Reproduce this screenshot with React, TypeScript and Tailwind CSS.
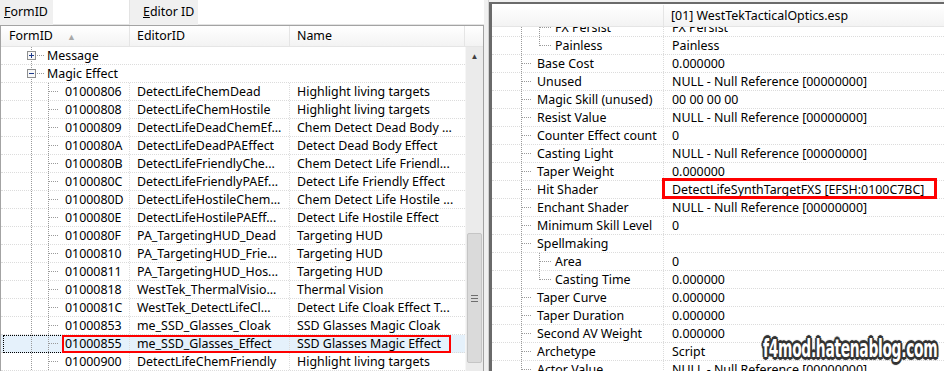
import React from "react";

const records = [
  ["01000806", "DetectLifeChemDead", "Highlight living targets"],
  ["01000808", "DetectLifeChemHostile", "Highlight living targets"],
  ["01000809", "DetectLifeDeadChemEf...", "Chem Detect Dead Body ..."],
  ["0100080A", "DetectLifeDeadPAEffect", "Detect Dead Body Effect"],
  ["0100080B", "DetectLifeFriendlyChe...", "Chem Detect Life Friendl..."],
  ["0100080C", "DetectLifeFriendlyPAEf...", "Detect Life Friendly Effect"],
  ["0100080D", "DetectLifeHostileChem...", "Chem Detect Life Hostile ..."],
  ["0100080E", "DetectLifeHostilePAEff...", "Detect Life Hostile Effect"],
  ["0100080F", "PA_TargetingHUD_Dead", "Targeting HUD"],
  ["01000810", "PA_TargetingHUD_Frie...", "Targeting HUD"],
  ["01000811", "PA_TargetingHUD_Hos...", "Targeting HUD"],
  ["01000818", "WestTek_ThermalVisio...", "Thermal Vision"],
  ["0100081C", "WestTek_DetectLifeCl...", "Detect Life Cloak Effect T..."],
  ["01000853", "me_SSD_Glasses_Cloak", "SSD Glasses Magic Cloak"],
  ["01000855", "me_SSD_Glasses_Effect", "SSD Glasses Magic Effect"],
  ["01000900", "DetectLifeChemFriendly", "Highlight living targets"],
];

const NULLREF = "NULL - Null Reference [00000000]";

// level: 1 = top, 2 = child, 3 = last child
const fields: [string, string, number][] = [
  ["FX Persist", "FX Persist", 2],
  ["Painless", "Painless", 3],
  ["Base Cost", "0.000000", 1],
  ["Unused", NULLREF, 1],
  ["Magic Skill (unused)", "00 00 00 00", 1],
  ["Resist Value", NULLREF, 1],
  ["Counter Effect count", "0", 1],
  ["Casting Light", NULLREF, 1],
  ["Taper Weight", "0.000000", 1],
  ["Hit Shader", "DetectLifeSynthTargetFXS [EFSH:0100C7BC]", 1],
  ["Enchant Shader", NULLREF, 1],
  ["Minimum Skill Level", "0", 1],
  ["Spellmaking", "", 1],
  ["Area", "0", 2],
  ["Casting Time", "0.000000", 3],
  ["Taper Curve", "0.000000", 1],
  ["Taper Duration", "0.000000", 1],
  ["Second AV Weight", "0.000000", 1],
  ["Archetype", "Script", 1],
  ["Actor Value", NULLREF, 1],
];

const dot = { stroke: "#9a9a9a", strokeDasharray: "1 1", strokeWidth: 1 };

function Expander({ open }: { open: boolean }) {
  return (
    <svg width="62" height="17" className="absolute left-0 top-0">
      <line x1="30.5" y1="0" x2="30.5" y2="17" {...dot} />
      <line x1="36" y1="8.5" x2="44" y2="8.5" {...dot} />
      <rect x="26.5" y="4.5" width="8" height="8" fill="#f8f8f8" stroke="#8e8f8f" />
      <line x1="28" y1="8.5" x2="33" y2="8.5" stroke="#1d3a8a" />
      {!open && <line x1="30.5" y1="6" x2="30.5" y2="11" stroke="#1d3a8a" />}
    </svg>
  );
}

function ChildLines() {
  return (
    <svg width="62" height="17" className="absolute left-0 top-0">
      <line x1="30.5" y1="0" x2="30.5" y2="17" {...dot} />
      <line x1="47.5" y1="0" x2="47.5" y2="17" {...dot} />
      <line x1="48" y1="8.5" x2="58" y2="8.5" {...dot} />
    </svg>
  );
}

function FieldLines({ level }: { level: number }) {
  return (
    <svg width="63" height="17" className="absolute left-0 top-0">
      <line x1="29.5" y1="0" x2="29.5" y2="17" {...dot} />
      {level === 1 && <line x1="30" y1="8.5" x2="40" y2="8.5" {...dot} />}
      {level > 1 && <line x1="47.5" y1="0" x2="47.5" y2={level === 3 ? 9 : 17} {...dot} />}
      {level > 1 && <line x1="48" y1="8.5" x2="59" y2="8.5" {...dot} />}
    </svg>
  );
}

function LeftPanel() {
  return (
    <div className="w-[484px] h-full flex flex-col bg-[#f0f0f0]">
      <div className="h-[25px] flex items-stretch shrink-0">
        <div className="w-[53px] pl-[4px] flex items-center">
          <span><u>F</u>ormID</span>
        </div>
        <div className="w-[77px] bg-white border-r border-b border-[#e3e3e3]" />
        <div className="w-[13px]" />
        <div className="w-[55px] flex items-center">
          <span><u>E</u>ditor ID</span>
        </div>
        <div className="flex-1 bg-white border-b border-[#e3e3e3]" />
      </div>
      <div className="flex-1 flex flex-col border-l border-t border-r border-[#a3a3a3] bg-white overflow-hidden">
        <div className="h-[21px] shrink-0 flex bg-gradient-to-b from-white to-[#f3f3f3] border-b border-[#e5e5e5]">
          <div className="w-[129px] pl-[8px] flex items-center border-r border-[#e5e5e5]">
            FormID
            <span className="ml-[14px] text-[9px] text-[#a8a8a8]">▲</span>
          </div>
          <div className="w-[160px] pl-[7px] flex items-center border-r border-[#e5e5e5]">EditorID</div>
          <div className="w-[175px] pl-[7px] flex items-center border-r border-[#e5e5e5]">Name</div>
          <div className="flex-1" />
        </div>
        <div className="flex-1 flex overflow-hidden">
          <div className="w-[464px] flex flex-col">
            {["Message", "Magic Effect"].map((name, i) => (
              <div key={name} className="h-[18px] shrink-0 flex border-b border-dotted border-[#dcdcdc]">
                <div className="relative w-[129px] pl-[46px] pt-px flex items-center">
                  <Expander open={i === 1} />
                  <span className="relative">{name}</span>
                </div>
                <div className="flex-1" />
              </div>
            ))}
            {records.map(([id, edid, name]) => {
              const sel = id === "01000855";
              return (
                <div
                  key={id}
                  className={`relative h-[18px] shrink-0 flex border-b border-dotted border-[#dcdcdc] ${sel ? "bg-[#e5f1fb]" : ""}`}
                >
                  <div className="relative w-[129px] pl-[64px] pt-px flex items-center border-r border-dotted border-[#dcdcdc]">
                    <ChildLines />
                    <span className="relative">{id}</span>
                  </div>
                  <div className="w-[160px] pl-[7px] pt-px flex items-center border-r border-dotted border-[#dcdcdc] whitespace-nowrap overflow-hidden">
                    {edid}
                  </div>
                  <div className="flex-1 pl-[7px] pt-px flex items-center whitespace-nowrap overflow-hidden">{name}</div>
                  {sel && (
                    <>
                      <div className="absolute left-[2px] top-0 w-[60px] h-[18px] border border-r-0 border-dotted border-black" />
                      <div className="absolute left-[61px] top-0 w-[389px] h-[18px] border-2 border-[#ff0000]" />
                    </>
                  )}
                </div>
              );
            })}
          </div>
          <div className="flex-1 bg-[#ebebeb] flex flex-col items-center border-l border-[#f6f6f6]">
            <div className="h-[17px] flex items-center text-[8px] text-[#404040]">▲</div>
            <div className="h-[169px]" />
            <div className="w-[15px] h-[130px] rounded-[2px] bg-[#dadada] border border-[#c5c5c5] flex flex-col items-center justify-center gap-[2px]">
              <div className="w-[7px] h-px bg-[#6e6e6e]" />
              <div className="w-[7px] h-px bg-[#6e6e6e]" />
              <div className="w-[7px] h-px bg-[#6e6e6e]" />
            </div>
          </div>
        </div>
      </div>
    </div>
  );
}

function RightPanel() {
  return (
    <div className="flex-1 h-full flex flex-col bg-[#f0f0f0] pt-[2px] border-l border-[#d0d0d0]">
      <div className="flex-1 flex flex-col border-t-2 border-l-[3px] border-[#6a6a6a] bg-white overflow-hidden">
        <div className="relative z-10 h-[22px] shrink-0 flex mt-px bg-gradient-to-b from-white to-[#f3f3f3] border-b border-[#e5e5e5]">
          <div className="w-[172px] border-r border-[#e5e5e5]" />
          <div className="flex-1 pl-[7px] pt-px flex items-center">[01] WestTekTacticalOptics.esp</div>
        </div>
        <div className="flex-1 flex flex-col -mt-[8px] overflow-hidden">
          {fields.map(([label, value, level]) => (
            <div key={label} className="h-[18px] shrink-0 flex border-b border-dotted border-[#dcdcdc]">
              <div
                className={`relative w-[172px] pt-px flex items-center border-r border-dotted border-[#dcdcdc] whitespace-nowrap ${level === 1 ? "pl-[45px]" : "pl-[63px]"}`}
              >
                <FieldLines level={level} />
                <span className="relative">{label}</span>
              </div>
              <div className="relative flex-1 pl-[8px] pt-px flex items-center whitespace-nowrap">
                {value}
                {label === "Hit Shader" && (
                  <div className="absolute -left-[2px] -top-[3px] w-[275px] h-[21px] border-[3px] border-[#ff0000]" />
                )}
              </div>
            </div>
          ))}
        </div>
      </div>
    </div>
  );
}

export default function App() {
  return (
    <div className="relative w-[944px] h-[371px] overflow-hidden flex bg-[#f0f0f0] text-[12.4px] leading-none text-black font-['Noto_Sans',sans-serif]">
      <LeftPanel />
      <div className="w-[4px] bg-[#f0f0f0]" />
      <RightPanel />
      <div className="absolute left-[763px] top-[336px] text-white font-bold text-[25px] tracking-[-0.5px] font-['DejaVu_Sans_Condensed','DejaVu_Sans',sans-serif] origin-left scale-x-[0.615] [text-shadow:2px_0_0_#333,-2px_0_0_#333,0_2px_0_#333,0_-2px_0_#333,2px_2px_0_#333,-2px_-2px_0_#333,2px_-2px_0_#333,-2px_2px_0_#333,3px_0_1px_#333,-3px_0_1px_#333,0_3px_1px_#333,0_-3px_1px_#333]">
        f4mod.hatenablog.com
      </div>
    </div>
  );
}
